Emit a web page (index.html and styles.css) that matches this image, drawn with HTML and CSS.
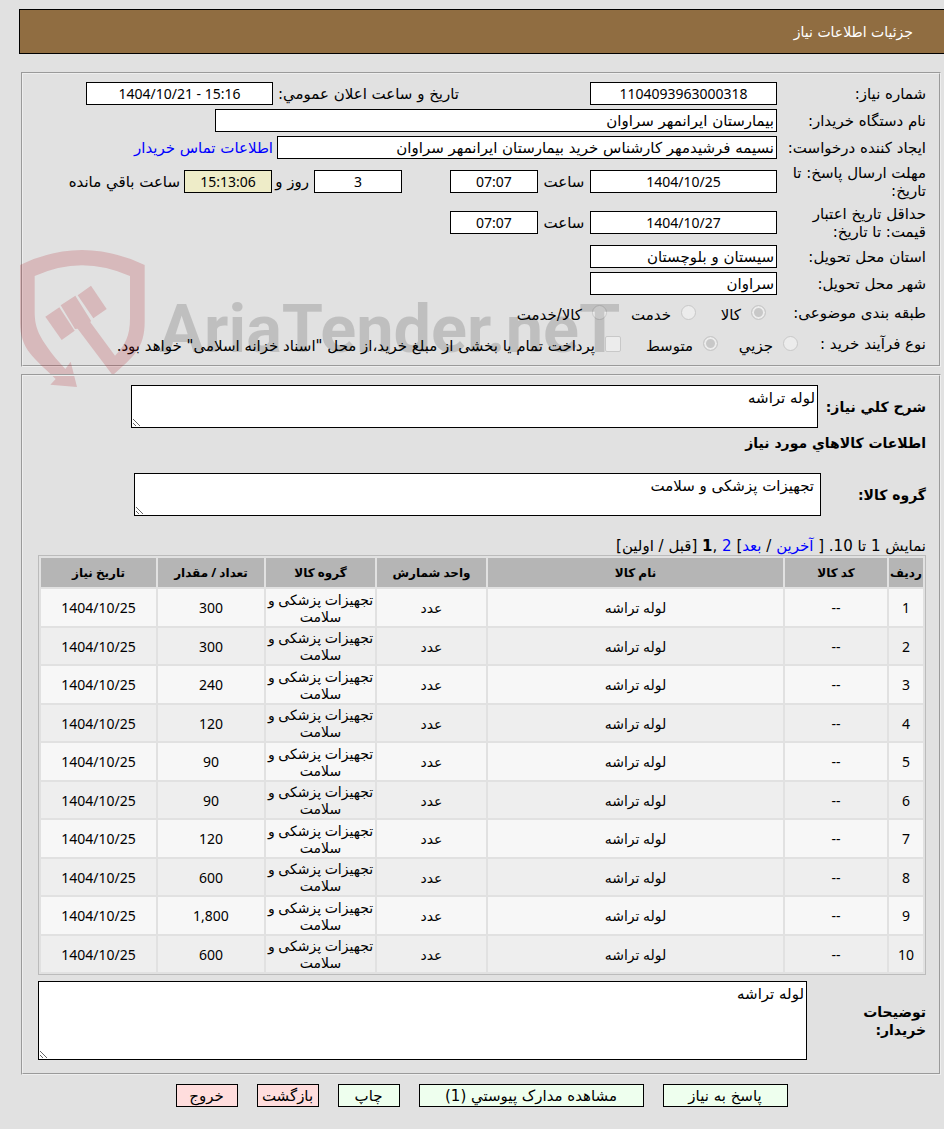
FILE: index.html
```html
<!DOCTYPE html>
<html lang="fa" dir="rtl">
<head>
  <meta charset="UTF-8">
  <meta name="viewport" content="width=device-width, initial-scale=1.0">
  <title>جزئیات اطلاعات نیاز</title>
  <link rel="stylesheet" href="styles.css">
</head>
<body>
  <h1 class="title-bar">جزئیات اطلاعات نیاز</h1>

  <form>
    <section class="panel need-info">
      <div class="row">
        <label class="caption" for="needNo">شماره نیاز:</label>
        <input class="field w-code" id="needNo" type="text" value="1104093963000318" readonly>
        <label class="announce" for="announce">تاریخ و ساعت اعلان عمومي:</label>
        <input class="field w-code" id="announce" type="text" dir="ltr" value="1404/10/21 - 15:16" readonly>
      </div>
      <div class="row">
        <label class="caption" for="org">نام دستگاه خریدار:</label>
        <input class="field text w-org" id="org" type="text" value="بیمارستان ایرانمهر سراوان" readonly>
      </div>
      <div class="row">
        <label class="caption" for="creator">ایجاد کننده درخواست:</label>
        <input class="field text w-creator" id="creator" type="text" value="نسیمه فرشیدمهر کارشناس خرید بیمارستان ایرانمهر سراوان" readonly>
        <a class="contact" href="#">اطلاعات تماس خریدار</a>
      </div>
      <div class="row tall">
        <label class="caption" for="replyDate">مهلت ارسال پاسخ: تا تاریخ:</label>
        <input class="field w-code" id="replyDate" type="text" dir="ltr" value="1404/10/25" readonly>
        <label class="hour" for="replyTime">ساعت</label>
        <input class="field w-time" id="replyTime" type="text" value="07:07" readonly>
        <input class="field w-time days" id="days" type="text" value="3" aria-label="روز" readonly>
        <label class="day" for="days">روز و</label>
        <input class="field w-time remain" id="remain" type="text" value="15:13:06" readonly>
        <label class="contact" for="remain">ساعت باقي مانده</label>
      </div>
      <div class="row tall">
        <label class="caption" for="priceDate">حداقل تاریخ اعتبار قیمت: تا تاریخ:</label>
        <input class="field w-code" id="priceDate" type="text" dir="ltr" value="1404/10/27" readonly>
        <label class="hour" for="priceTime">ساعت</label>
        <input class="field w-time" id="priceTime" type="text" value="07:07" readonly>
      </div>
      <div class="row">
        <label class="caption" for="province">استان محل تحویل:</label>
        <input class="field text w-code" id="province" type="text" value="سیستان و بلوچستان" readonly>
      </div>
      <div class="row">
        <label class="caption" for="city">شهر محل تحویل:</label>
        <input class="field text w-code" id="city" type="text" value="سراوان" readonly>
      </div>
      <div class="row options">
        <span class="caption wide">طبقه بندی موضوعی:</span>
        <label class="option o-goods"><input type="radio" name="category" checked disabled><span>کالا</span></label>
        <label class="option o-service"><input type="radio" name="category" disabled><span>خدمت</span></label>
        <label class="option"><input type="radio" name="category" disabled><span>کالا/خدمت</span></label>
      </div>
      <div class="row options">
        <span class="caption narrow">نوع فرآیند خرید :</span>
        <label class="option o-small"><input type="radio" name="process" disabled><span>جزیي</span></label>
        <label class="option o-medium"><input type="radio" name="process" checked disabled><span>متوسط</span></label>
        <label class="option"><input type="checkbox" disabled><span>پرداخت تمام یا بخشی از مبلغ خرید،از محل "اسناد خزانه اسلامی" خواهد بود.</span></label>
      </div>

      <svg class="watermark" viewBox="30 30 1860 450" aria-hidden="true">
        <g class="mark-red">
          <path d="M30 90 Q215 0 404 90 V260 C404 340 370 365 308 421 L203 281 L195 282 L152 211 L196 182 L243 257 L241 262 L315 362 C345 330 360 305 360 250 V123 Q215 58 74 123 V230 C74 285 92 310 137 370 L166 402 L182 380 L201 456 L121 449 L137 432 C75 370 30 345 30 260 Z"/>
          <path d="M106 245 L148 217 L194 287 L155 315 Z"/>
          <path d="M203 181 L243 152 L290 222 L250 250 Z"/>
        </g>
        <text class="mark-text" x="448" y="350" direction="ltr">AriaTender.neT</text>
      </svg>
    </section>

    <section class="panel goods">
      <div class="area-row">
        <label class="head" for="summary">شرح کلي نیاز:</label>
        <textarea class="area summary" id="summary" readonly>لوله تراشه</textarea>
      </div>
      <h2 class="head sub">اطلاعات کالاهاي مورد نیاز</h2>
      <div class="area-row">
        <label class="head group-label" for="group">گروه کالا:</label>
        <textarea class="area group" id="group" readonly>تجهیزات پزشکی و سلامت</textarea>
      </div>

      <div class="pager">نمایش 1 تا 10. [ <a href="#">آخرین</a> / <a href="#">بعد</a>] <a href="#">2</a> ,<b>1</b> [قبل / اولین]</div>
      <table class="items">
        <colgroup>
          <col class="c-row"><col class="c-code"><col><col class="c-unit"><col class="c-unit"><col class="c-count"><col class="c-date">
        </colgroup>
        <thead>
          <tr><th>ردیف</th><th>کد کالا</th><th>نام کالا</th><th>واحد شمارش</th><th>گروه کالا</th><th>تعداد / مقدار</th><th>تاریخ نیاز</th></tr>
        </thead>
        <tbody>
          <tr><td>1</td><td>--</td><td>لوله تراشه</td><td>عدد</td><td>تجهیزات پزشکی و سلامت</td><td>300</td><td dir="ltr">1404/10/25</td></tr>
          <tr><td>2</td><td>--</td><td>لوله تراشه</td><td>عدد</td><td>تجهیزات پزشکی و سلامت</td><td>300</td><td dir="ltr">1404/10/25</td></tr>
          <tr><td>3</td><td>--</td><td>لوله تراشه</td><td>عدد</td><td>تجهیزات پزشکی و سلامت</td><td>240</td><td dir="ltr">1404/10/25</td></tr>
          <tr><td>4</td><td>--</td><td>لوله تراشه</td><td>عدد</td><td>تجهیزات پزشکی و سلامت</td><td>120</td><td dir="ltr">1404/10/25</td></tr>
          <tr><td>5</td><td>--</td><td>لوله تراشه</td><td>عدد</td><td>تجهیزات پزشکی و سلامت</td><td>90</td><td dir="ltr">1404/10/25</td></tr>
          <tr><td>6</td><td>--</td><td>لوله تراشه</td><td>عدد</td><td>تجهیزات پزشکی و سلامت</td><td>90</td><td dir="ltr">1404/10/25</td></tr>
          <tr><td>7</td><td>--</td><td>لوله تراشه</td><td>عدد</td><td>تجهیزات پزشکی و سلامت</td><td>120</td><td dir="ltr">1404/10/25</td></tr>
          <tr><td>8</td><td>--</td><td>لوله تراشه</td><td>عدد</td><td>تجهیزات پزشکی و سلامت</td><td>600</td><td dir="ltr">1404/10/25</td></tr>
          <tr><td>9</td><td>--</td><td>لوله تراشه</td><td>عدد</td><td>تجهیزات پزشکی و سلامت</td><td>1,800</td><td dir="ltr">1404/10/25</td></tr>
          <tr><td>10</td><td>--</td><td>لوله تراشه</td><td>عدد</td><td>تجهیزات پزشکی و سلامت</td><td>600</td><td dir="ltr">1404/10/25</td></tr>
        </tbody>
      </table>

      <div class="area-row notes-row">
        <label class="head notes-label" for="notes">توضیحات خریدار:</label>
        <textarea class="area notes" id="notes" readonly>لوله تراشه</textarea>
      </div>
    </section>

    <div class="buttons">
      <button type="button" class="btn reply">پاسخ به نیاز</button>
      <button type="button" class="btn docs">مشاهده مدارک پیوستي (1)</button>
      <button type="button" class="btn">چاپ</button>
      <button type="button" class="btn red">بازگشت</button>
      <button type="button" class="btn red">خروج</button>
    </div>
  </form>
</body>
</html>
```

FILE: styles.css
```css
* {
  box-sizing: border-box;
}
body {
  margin: 9px 0 0 19px;
  background: #e1e1e1;
  color: #000;
  font-family: Tahoma, "DejaVu Sans", sans-serif;
  font-size: 15px;
  line-height: 18px;
}
input, textarea, button {
  font: inherit;
  color: inherit;
}
a {
  color: #00f;
  text-decoration: none;
}
.title-bar {
  margin: 0 0 18px;
  padding: 13px 31px 12px 0;
  border: 1px solid #000;
  border-right: 0;
  background: #906d41;
  color: #fff;
  font-size: 14px;
  font-weight: normal;
}

/* panels */
.panel {
  position: relative;
  margin: 0 3px 7px 2px;
  border: 2px groove #eee;
}
.need-info {
  display: flex;
  flex-direction: column;
  gap: 4px;
  padding: 8px 13px;
}
.row {
  display: flex;
  align-items: center;
  min-height: 23px;
  white-space: nowrap;
}
.row.tall {
  min-height: 37px;
}
.row.options {
  min-height: 27px;
}
.caption {
  flex: none;
  width: 149px;
  padding-left: 8px;
}
.tall .caption {
  white-space: normal;
}
.caption.wide {
  width: 160px;
}
.caption.narrow {
  width: 128px;
  padding-left: 0;
}
.field {
  flex: none;
  height: 23px;
  padding: 0 2px;
  border: 1px solid #000;
  background: #fff;
  font-family: Tahoma, "Noto Sans", sans-serif;
  font-size: 14px;
  text-align: center;
}
.field.text {
  font-family: inherit;
  font-size: 15px;
  text-align: right;
}
.w-code { width: 187px; }
.w-org { width: 562px; }
.w-creator { width: 500px; }
.w-time { width: 88px; }
.days { margin-right: 48px; }
.remain { background: #eeecc8; }
.announce {
  width: 317px;
  padding-left: 5px;
  text-align: left;
}
.hour {
  width: 52px;
  text-align: center;
}
.day {
  width: 42px;
  padding-right: 5px;
}
.contact {
  padding-right: 4px;
}
.option {
  display: flex;
  align-items: center;
  gap: 10px;
}
.option span {
  padding-top: 4px;
}
.o-goods { width: 70px; }
.o-service { width: 89px; }
.o-small { width: 80px; }
.o-medium { width: 97px; }
.option input {
  appearance: none;
  flex: none;
  width: 15px;
  height: 15px;
  margin: 0;
  border: 1px solid #c8c8c8;
  border-radius: 50%;
  background: #ececec;
}
.option input[type="checkbox"] {
  width: 16px;
  height: 16px;
  border-radius: 2px;
}
.option input:checked {
  background: #c8c8c8;
  box-shadow: inset 0 0 0 2px #ececec;
}

.watermark {
  position: absolute;
  left: -3px;
  top: 171px;
  width: 620px;
  height: 150px;
  pointer-events: none;
}
.mark-red {
  fill: rgba(175, 25, 35, 0.2);
}
.mark-text {
  fill: rgba(0, 0, 0, 0.15);
  font-family: Roboto, "Liberation Sans", sans-serif;
  font-size: 200px;
  font-weight: bold;
}

/* goods */
.goods {
  padding: 9px 13px 13px 15px;
}
.area-row {
  display: flex;
  align-items: center;
}
.head {
  margin: 0;
  font-size: 14px;
  font-weight: bold;
}
.sub {
  margin: 6px 0 21px;
}
.area-row .head {
  flex: none;
  width: 108px;
}
.area-row .group-label {
  width: 105px;
}
.area-row .notes-label {
  width: 119px;
  padding-left: 40px;
}
.area {
  flex: none;
  width: 687px;
  height: 43px;
  padding: 3px 2px;
  border: 1px solid #000;
  background: #fff;
}
.group {
  padding-right: 6px;
}
.notes {
  flex: 1;
  height: 79px;
}
.notes-row {
  margin-top: 6px;
}
.pager {
  margin-top: 21px;
}
.items {
  width: 100%;
  table-layout: fixed;
  border: 1px solid #bbb;
  border-spacing: 2px;
  font-family: Tahoma, "Noto Sans", "DejaVu Sans", sans-serif;
  font-size: 14px;
  line-height: 17px;
}
.items th {
  height: 29px;
  padding: 0;
  background: #b5b5b5;
  font-size: 12px;
  white-space: nowrap;
}
.items td {
  height: 37px;
  padding: 0;
  background: #f7f7f7;
  text-align: center;
}
.items tr:nth-child(even) td {
  height: 36px;
  background: #eee;
}
.c-row { width: 34px; }
.c-code { width: 102px; }
.c-unit { width: 109px; }
.c-count { width: 106px; }
.c-date { width: 115px; }

.buttons {
  display: flex;
  justify-content: center;
  gap: 19px;
  margin-top: 9px;
  padding-bottom: 22px;
}
.btn {
  width: 62px;
  height: 23px;
  padding: 0;
  border: 1px solid #000;
  background: #efe;
}
.btn.reply { width: 125px; }
.btn.docs { width: 225px; }
.btn.red { background: #fdd; }
```
